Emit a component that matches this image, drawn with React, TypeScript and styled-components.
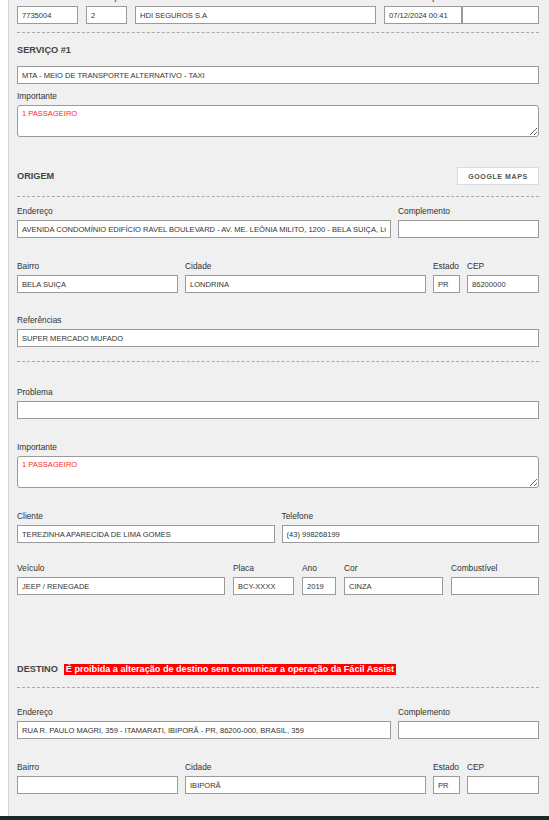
import React from "react";
import styled, { createGlobalStyle } from "styled-components";

const GlobalStyle = createGlobalStyle`
  html, body { margin: 0; padding: 0; background: #ffffff; }
  body { font-family: "Liberation Sans", Arial, sans-serif; }
  * { box-sizing: border-box; }
`;

const Page = styled.div`
  margin-left: 8px;
  border-left: 1px solid #d3d3d3;
  background: #f0f0f0;
  padding: 0 10px 40px 8px;
  min-height: calc(100vh + 20px);
  overflow: hidden;
`;

const Row = styled.div<{ $cols: string; $gap?: number; $mt?: number }>`
  display: grid;
  grid-template-columns: ${(p) => p.$cols};
  column-gap: ${(p) => p.$gap ?? 7}px;
  margin-top: ${(p) => p.$mt ?? 0}px;
`;

const Field = styled.div`
  display: flex;
  flex-direction: column;
  min-width: 0;
`;

const Label = styled.label`
  display: block;
  font-size: 8.35px;
  line-height: 13px;
  height: 13px;
  margin-bottom: 2px;
  color: #333;
  white-space: nowrap;
`;

const Input = styled.input`
  display: block;
  width: 100%;
  min-width: 0;
  height: 18px;
  margin: 0;
  padding: 0 4px;
  border: 1px solid #9a9a9a;
  border-radius: 0;
  background: #fff;
  font-family: "Liberation Sans", Arial, sans-serif;
  font-size: 7.55px;
  color: #333;
  outline: none;
`;

const Pair = styled.div`
  display: flex;
`;

const TextArea = styled.textarea`
  display: block;
  width: 100%;
  height: 32px;
  margin: 0;
  padding: 3px 4px;
  border: 1px solid #9a9a9a;
  border-radius: 3px;
  background: #fff;
  font-family: "Liberation Sans", Arial, sans-serif;
  font-size: 7.55px;
  line-height: 10px;
  color: #ff2a2a;
  resize: vertical;
  outline: none;
`;

const Divider = styled.hr<{ $mt: number }>`
  margin: ${(p) => p.$mt}px 0 0;
  border: 0;
  border-top: 1px dashed #a9a9a9;
  height: 0;
`;

const SectionHeader = styled.div<{ $mt: number }>`
  display: flex;
  align-items: center;
  justify-content: space-between;
  min-height: 18px;
  margin-top: ${(p) => p.$mt}px;
`;

const TitleGroup = styled.div`
  display: flex;
  align-items: center;
  gap: 6px;
`;

const Title = styled.div`
  font-weight: bold;
  font-size: 9.2px;
  line-height: 14px;
  color: #444;
`;

const Warning = styled.span`
  background: #ff0000;
  color: #fff;
  font-weight: bold;
  font-size: 9.1px;
  line-height: 11px;
  padding: 0 2px;
  white-space: nowrap;
`;

const MapsButton = styled.button`
  width: 82px;
  height: 18px;
  padding: 0;
  background: #fff;
  border: 1px solid #dcdcdc;
  font-family: "Liberation Sans", Arial, sans-serif;
  font-weight: bold;
  font-size: 7px;
  letter-spacing: 0.6px;
  color: #555;
  cursor: pointer;
`;

const BottomBar = styled.div`
  position: fixed;
  left: 0;
  right: 0;
  bottom: 0;
  height: 4px;
  background: #1a2929;
`;

type FProps = { label?: string; value?: string };
const F = ({ label = "", value = "" }: FProps) => (
  <Field>
    <Label>{label}</Label>
    <Input readOnly value={value} />
  </Field>
);

const FArea = ({ label, value }: FProps) => (
  <Field>
    <Label>{label}</Label>
    <TextArea readOnly value={value} />
  </Field>
);

export default function App() {
  return (
    <>
      <GlobalStyle />
      <Page>
        <Row $cols="61px 41px 241px 1fr" $gap={8} $mt={-9}>
          <F label="Assistência" value="7735004" />
          <F label="Solicitação" value="2" />
          <F label="Produto" value="HDI SEGUROS S.A" />
          <Field>
            <Label>Data Solicitação</Label>
            <Pair>
              <Input readOnly value="07/12/2024 00:41" />
              <Input readOnly value="" />
            </Pair>
          </Field>
        </Row>

        <Divider $mt={8} />
        <SectionHeader $mt={8}>
          <Title>SERVIÇO #1</Title>
        </SectionHeader>
        <Row $cols="1fr" $mt={7}>
          <Input readOnly value="MTA - MEIO DE TRANSPORTE ALTERNATIVO - TAXI" />
        </Row>
        <Row $cols="1fr" $mt={6}>
          <FArea label="Importante" value="1 PASSAGEIRO" />
        </Row>

        <SectionHeader $mt={30}>
          <Title>ORIGEM</Title>
          <MapsButton>GOOGLE MAPS</MapsButton>
        </SectionHeader>
        <Divider $mt={11} />
        <Row $cols="1fr 141px" $mt={8}>
          <F
            label="Endereço"
            value="AVENIDA CONDOMÍNIO EDIFÍCIO RAVEL BOULEVARD - AV. ME. LEÔNIA MILITO, 1200 - BELA SUIÇA, LONDRINA - PR, 86050-270, BRASIL"
          />
          <F label="Complemento" />
        </Row>
        <Row $cols="161px 241px 27px 1fr" $mt={22}>
          <F label="Bairro" value="BELA SUIÇA" />
          <F label="Cidade" value="LONDRINA" />
          <F label="Estado" value="PR" />
          <F label="CEP" value="86200000" />
        </Row>
        <Row $cols="1fr" $mt={21}>
          <F label="Referências" value="SUPER MERCADO MUFADO" />
        </Row>
        <Divider $mt={14} />
        <Row $cols="1fr" $mt={24}>
          <F label="Problema" />
        </Row>
        <Row $cols="1fr" $mt={22}>
          <FArea label="Importante" value="1 PASSAGEIRO" />
        </Row>
        <Row $cols="1fr 1fr" $mt={22}>
          <F label="Cliente" value="TEREZINHA APARECIDA DE LIMA GOMES" />
          <F label="Telefone" value="(43) 998268199" />
        </Row>
        <Row $cols="208px 61px 34px 99px 1fr" $gap={8} $mt={19}>
          <F label="Veículo" value="JEEP / RENEGADE" />
          <F label="Placa" value="BCY-XXXX" />
          <F label="Ano" value="2019" />
          <F label="Cor" value="CINZA" />
          <F label="Combustível" />
        </Row>

        <SectionHeader $mt={65}>
          <TitleGroup>
            <Title>DESTINO</Title>
            <Warning>É proibida a alteração de destino sem comunicar a operação da Fácil Assist</Warning>
          </TitleGroup>
        </SectionHeader>
        <Divider $mt={9} />
        <Row $cols="1fr 141px" $mt={18}>
          <F
            label="Endereço"
            value="RUA R. PAULO MAGRI, 359 - ITAMARATI, IBIPORÃ - PR, 86200-000, BRASIL, 359"
          />
          <F label="Complemento" />
        </Row>
        <Row $cols="161px 241px 27px 1fr" $mt={22}>
          <F label="Bairro" />
          <F label="Cidade" value="IBIPORÃ" />
          <F label="Estado" value="PR" />
          <F label="CEP" />
        </Row>
      </Page>
      <BottomBar />
    </>
  );
}
